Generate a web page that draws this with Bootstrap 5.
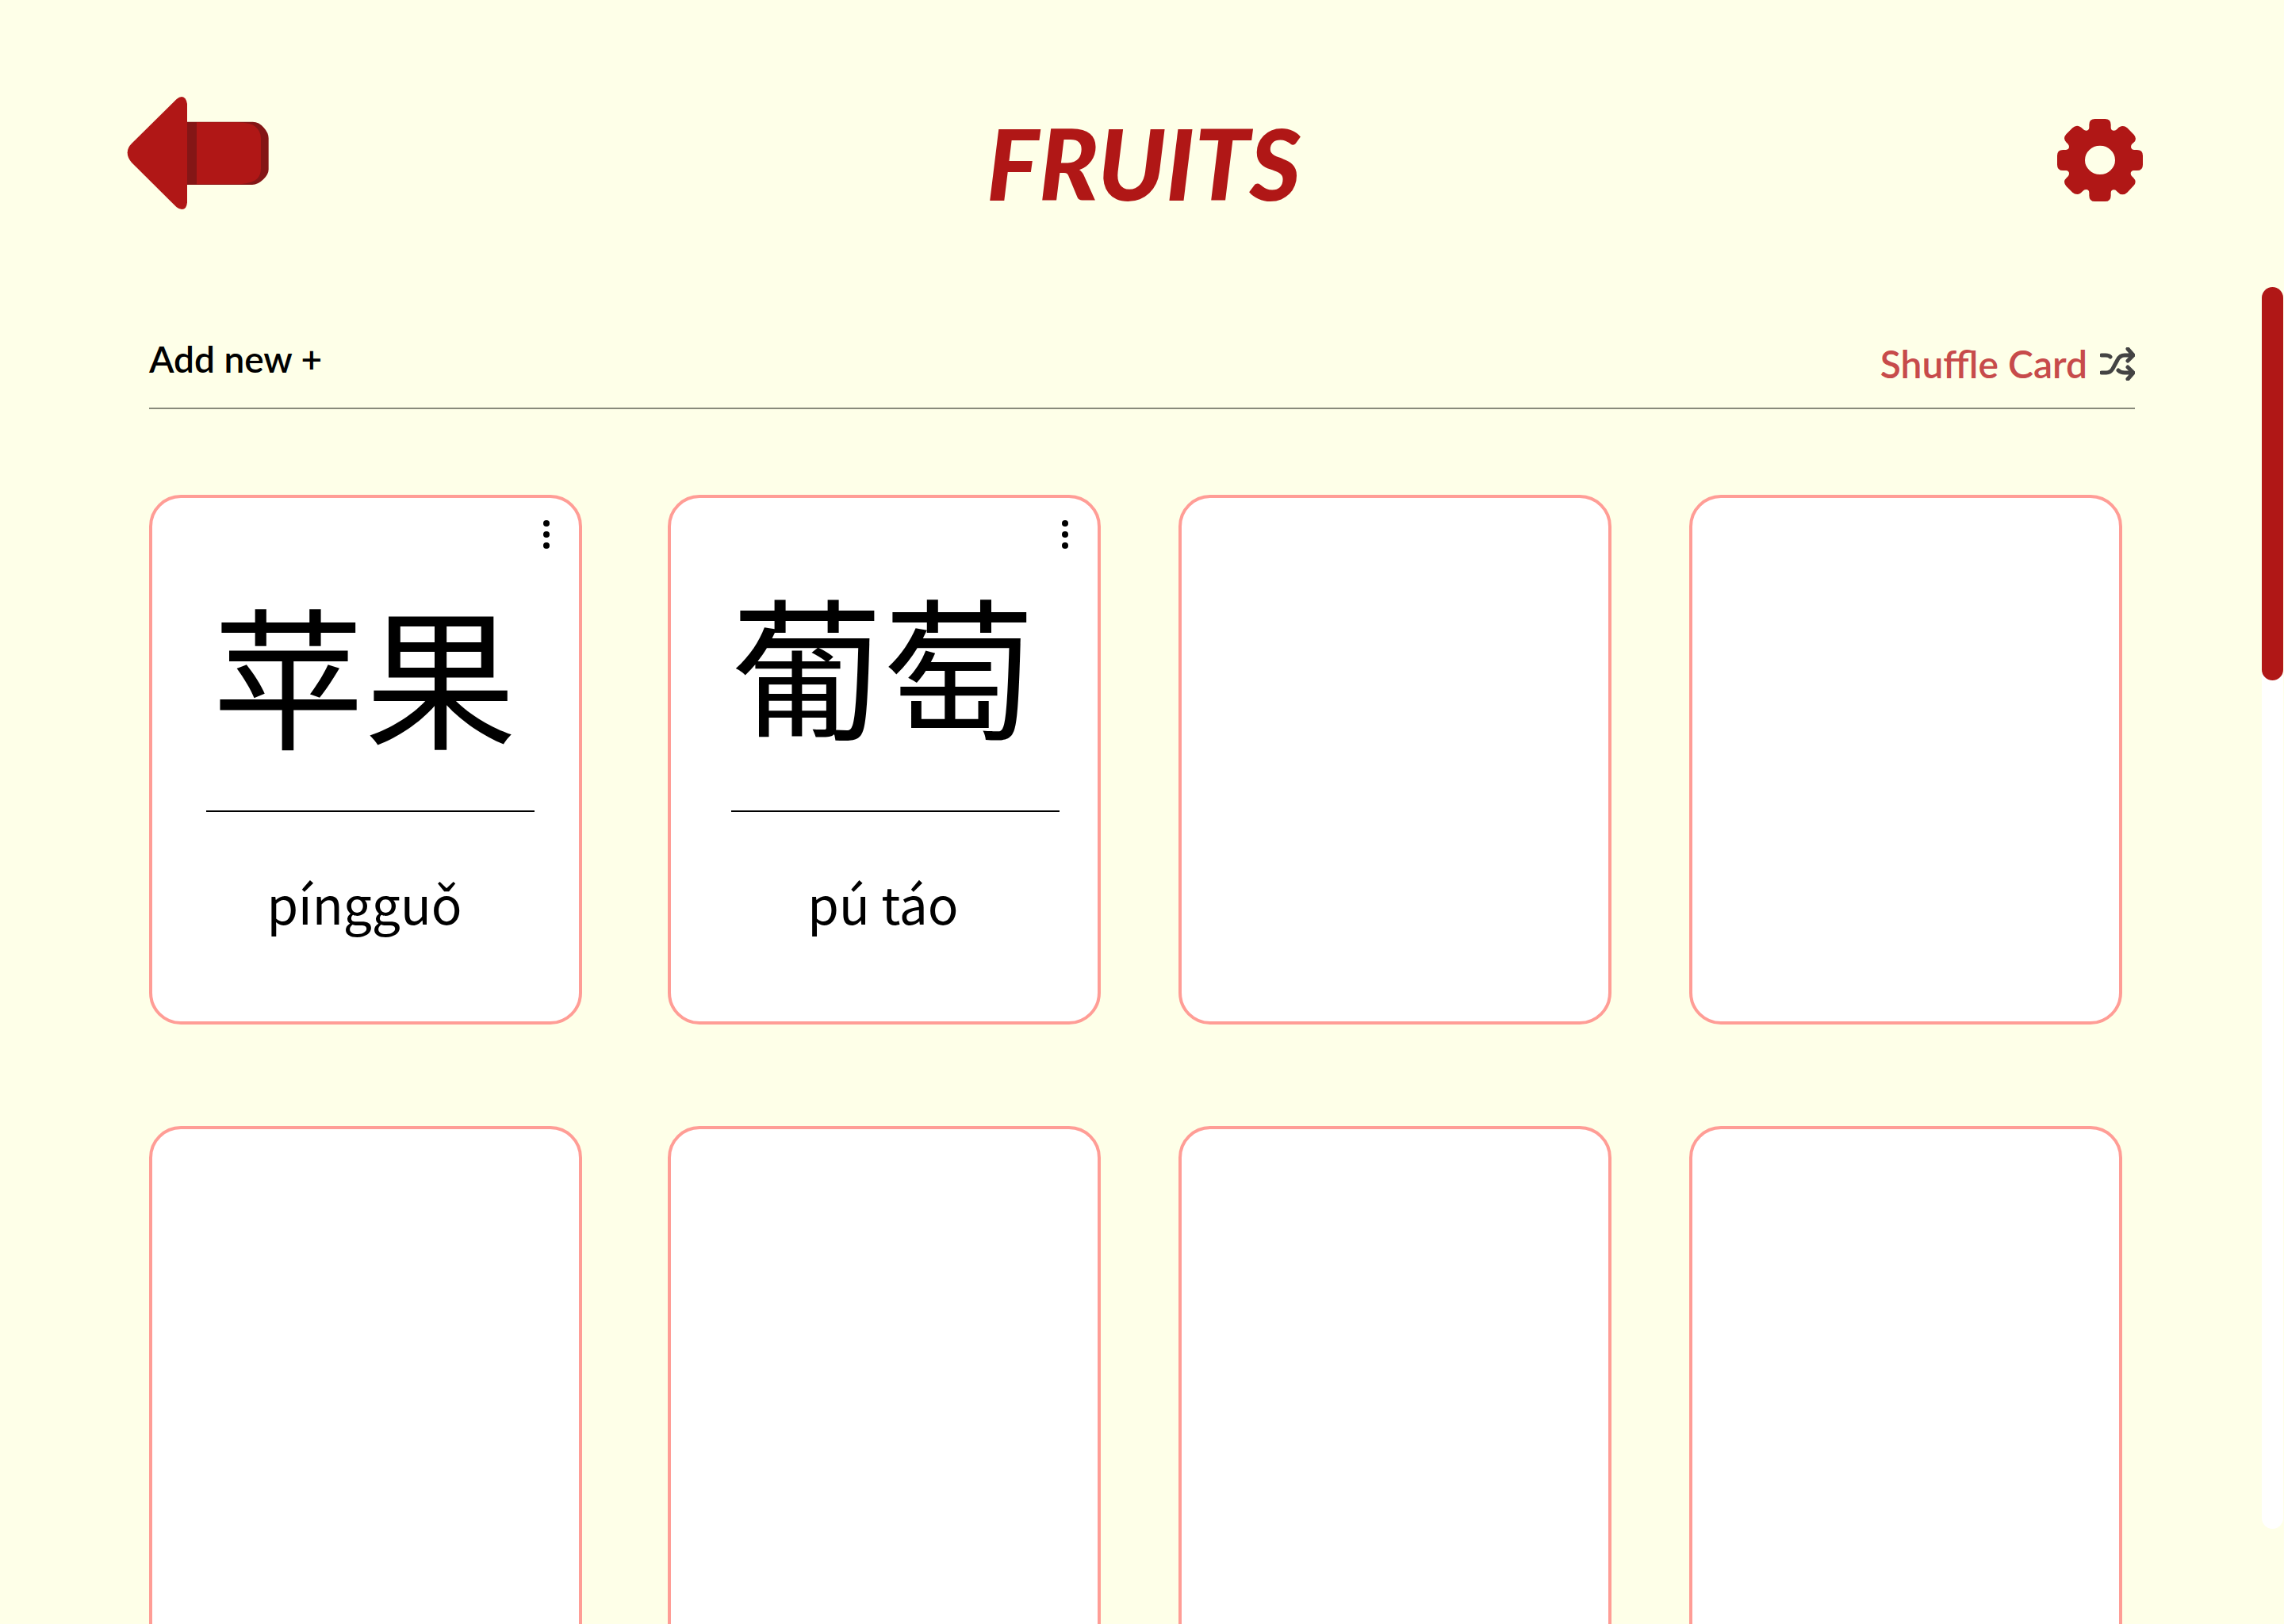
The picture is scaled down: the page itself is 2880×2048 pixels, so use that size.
<!DOCTYPE html>
<html lang="en">
<head>
<meta charset="utf-8">
<meta name="viewport" content="width=device-width, initial-scale=1">
<title>Fruits</title>
<link href="https://cdn.jsdelivr.net/npm/bootstrap@5.3.0/dist/css/bootstrap.min.css" rel="stylesheet">
<style>
  :root { --brand: #b01716; --paper: #feffe8; }
  body { background: var(--paper); color: #000; font-family: Lato, "Noto Sans CJK SC", sans-serif; }
  .topbar { display: grid; grid-template-columns: 1fr auto 1fr; height: 362px; padding: 42px 158px 0 160px; }
  .settings { padding-right: 20px; }
  .deck-title { color: var(--brand); font-size: 124px; font-weight: 900; font-style: italic; line-height: 124px; padding: 6px 0 0 2px; }
  .board { padding: 62px 160px 0 188px; }
  .toolbar { height: 92px; border-bottom: 2px solid #888a7b; font-size: 46px; line-height: 58px; font-weight: 600; }
  .shuffle { color: #c74b4b; font-size: 48px; padding-top: 6px; gap: 16px; }
  .deck { display: grid; grid-template-columns: 556fr 546fr 546fr 546fr; gap: 128px 98px; margin: 108px 16px 0 0; }
  .deck > :nth-child(4n+1) { margin-right: 10px; }
  .flash { --bs-card-border-width: 4px; --bs-card-border-color: #ff9d96; --bs-card-border-radius: 40px; --bs-card-bg: #fff; height: 668px; }
  .hanzi, .pinyin { font-family: "Noto Sans CJK SC", sans-serif; padding-right: 3px; }
  .hanzi { font-size: 192px; line-height: 192px; padding-top: 122px; height: 394px; }
  .hanzi-high { padding-top: 110px; }
  .rule { height: 2px; background: #000; margin: 0 56px 82px 68px; }
  .rule-right { margin: 0 48px 82px 76px; }
  .pinyin { font-size: 64px; line-height: 64px; }
  .kebab { top: 24px; right: 29px; }
  .track { width: 27px; margin: 0 1px 120px 0; background: #fff; border-radius: 14px; }
  .thumb { background: var(--brand); border-radius: 14px; }
</style>
</head>
<body>
<div class="d-flex flex-column vh-100 overflow-hidden">
  <header class="topbar align-items-center flex-shrink-0">
    <div>
      <button type="button" class="btn border-0 p-0" aria-label="Back">
        <svg class="d-block" width="180" height="162" viewBox="60 62 540 486" aria-hidden="true">
          <path fill="#841616" d="M286 160H536Q560 160 578 182Q596 202 596 222V340Q596 358 576 378Q556 398 534 398H286Z"/>
          <path fill="#b01716" d="M324 162H480Q532 164 546 178Q567 196 567 222V336Q567 362 552 376Q536 390 490 396H324Z"/>
          <path fill="#b01716" d="M78 242L248 74Q258 65 268 65Q284 66 288 92V465Q286 491 268 491Q258 491 248 483L78 314Q62 296 62 276Q62 258 78 242Z"/>
        </svg>
      </button>
    </div>
    <h1 class="deck-title m-0">FRUITS</h1>
    <div class="settings text-end">
      <button type="button" class="btn border-0 p-0" aria-label="Settings">
        <svg class="d-block" width="108" height="104" viewBox="72 60 324 312" aria-hidden="true">
          <path fill="#b01716" fill-rule="evenodd" d="M193 82Q193 60 215 60H253Q275 60 275 82V92Q275 104 287 104Q293 104 299 98Q308 87 320 87Q329 87 337 94L362 119Q369 127 369 135Q369 143 360 151L356 154Q350 160 351 166Q352 177 364 177H374Q396 177 396 199V233Q396 255 374 255H362Q350 256 350 267Q350 273 356 278L360 282Q368 290 368 298Q368 306 361 313L337 338Q329 346 319 346Q309 346 299 335Q293 328 287 328Q275 328 275 340V350Q275 372 253 372H215Q193 372 193 350V340Q193 327 181 327Q174 327 168 334Q159 345 148 345Q138 345 130 338L106 314Q99 306 99 298Q99 290 108 282L112 278Q117 273 117 267Q117 256 105 255H94Q72 255 72 233V199Q72 177 94 177H105Q117 176 117 165Q117 160 112 154L107 149Q99 141 99 133Q99 126 106 118L130 94Q138 86 147 86Q158 86 168 97Q174 104 181 104Q193 103 193 92ZM234 161Q210 161 194 177Q177 193 177 216Q177 238 194 254Q210 270 234 270Q258 270 274 254Q291 238 291 216Q291 193 274 177Q258 161 234 161Z"/>
        </svg>
      </button>
    </div>
  </header>

  <div class="d-flex flex-grow-1 overflow-hidden">
    <main class="board flex-grow-1 overflow-hidden">
      <div class="toolbar d-flex justify-content-between align-items-start">
        <a href="#new" class="text-reset text-decoration-none">Add new +</a>
        <a href="#shuffle" class="shuffle d-flex align-items-center text-decoration-none">Shuffle Card
          <svg width="44" height="42" viewBox="0 0 44 42" fill="none" stroke="#444" stroke-width="5" stroke-linecap="round" stroke-linejoin="round" aria-hidden="true">
            <path d="M2 10H7Q11 10 13 12M2 32H8Q13 32 16 27L22 16Q25 10 31 10H41M35 2L42 10L35 17M23 29Q26 32 31 32H41M35 25L42 32L35 40"/>
          </svg>
        </a>
      </div>

      <div class="deck">
        <article class="card flash">
          <button type="button" class="kebab btn border-0 p-0 position-absolute" aria-label="Card menu">
            <svg class="d-block" width="24" height="44" viewBox="0 0 24 44" aria-hidden="true"><circle cx="12" cy="8" r="4"/><circle cx="12" cy="22" r="4"/><circle cx="12" cy="36" r="4"/></svg>
          </button>
          <div class="hanzi text-center" lang="zh">苹果</div>
          <div class="rule"></div>
          <div class="pinyin text-center">píngguǒ</div>
        </article>
        <article class="card flash">
          <button type="button" class="kebab btn border-0 p-0 position-absolute" aria-label="Card menu">
            <svg class="d-block" width="24" height="44" viewBox="0 0 24 44" aria-hidden="true"><circle cx="12" cy="8" r="4"/><circle cx="12" cy="22" r="4"/><circle cx="12" cy="36" r="4"/></svg>
          </button>
          <div class="hanzi hanzi-high text-center" lang="zh">葡萄</div>
          <div class="rule rule-right"></div>
          <div class="pinyin text-center">pú táo</div>
        </article>
        <article class="card flash"></article>
        <article class="card flash"></article>
        <article class="card flash"></article>
        <article class="card flash"></article>
        <article class="card flash"></article>
        <article class="card flash"></article>
      </div>
    </main>
    <div class="track flex-shrink-0" aria-hidden="true"><div class="thumb" style="height:31.7%"></div></div>
  </div>
</div>
<script src="https://cdn.jsdelivr.net/npm/bootstrap@5.3.0/dist/js/bootstrap.bundle.min.js"></script>
</body>
</html>
